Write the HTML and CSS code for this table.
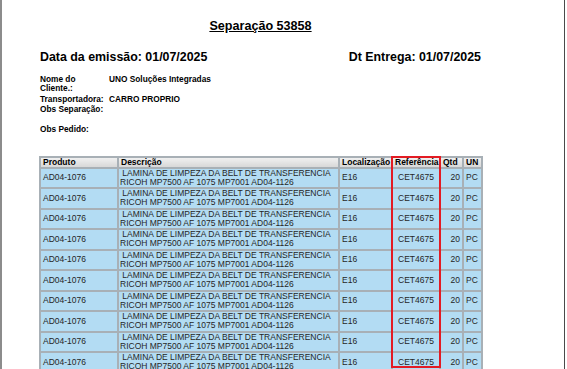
FILE: index.html
```html
<!DOCTYPE html>
<html lang="pt-BR">
<head>
<meta charset="utf-8">
<title>Separação 53858</title>
<link rel="stylesheet" href="styles.css">
</head>
<body>
<div class="page">
  <div class="content">
    <h1 class="title">Separação 53858</h1>
    <div class="dates">
      <span>Data da emissão: 01/07/2025</span>
      <span>Dt Entrega: 01/07/2025</span>
    </div>
    <div class="info">
      <div class="lbl">Nome do<br>Cliente.:</div><div class="val">UNO Soluções Integradas</div>
      <div class="lbl">Transportadora:</div><div class="val">CARRO PROPRIO</div>
      <div class="lbl">Obs Separação:</div><div class="val"></div>
      <div class="lbl gap">Obs Pedido:</div><div class="val gap"></div>
    </div>
    <div class="table-wrap">
      <table class="items">
        <colgroup>
          <col class="c-prod"><col class="c-desc"><col class="c-loc"><col class="c-ref"><col class="c-qtd"><col class="c-un">
        </colgroup>
        <thead>
          <tr><th>Produto</th><th>Descrição</th><th>Localização</th><th>Referência</th><th>Qtd</th><th>UN</th></tr>
        </thead>
        <tbody>
          <tr><td>AD04-1076</td><td class="desc">&nbsp;LAMINA DE LIMPEZA DA BELT DE TRANSFERENCIA<br>RICOH MP7500 AF 1075 MP7001 AD04-1126</td><td>E16</td><td class="ref">CET4675</td><td class="qtd">20</td><td>PC</td></tr>
          <tr><td>AD04-1076</td><td class="desc">&nbsp;LAMINA DE LIMPEZA DA BELT DE TRANSFERENCIA<br>RICOH MP7500 AF 1075 MP7001 AD04-1126</td><td>E16</td><td class="ref">CET4675</td><td class="qtd">20</td><td>PC</td></tr>
          <tr><td>AD04-1076</td><td class="desc">&nbsp;LAMINA DE LIMPEZA DA BELT DE TRANSFERENCIA<br>RICOH MP7500 AF 1075 MP7001 AD04-1126</td><td>E16</td><td class="ref">CET4675</td><td class="qtd">20</td><td>PC</td></tr>
          <tr><td>AD04-1076</td><td class="desc">&nbsp;LAMINA DE LIMPEZA DA BELT DE TRANSFERENCIA<br>RICOH MP7500 AF 1075 MP7001 AD04-1126</td><td>E16</td><td class="ref">CET4675</td><td class="qtd">20</td><td>PC</td></tr>
          <tr><td>AD04-1076</td><td class="desc">&nbsp;LAMINA DE LIMPEZA DA BELT DE TRANSFERENCIA<br>RICOH MP7500 AF 1075 MP7001 AD04-1126</td><td>E16</td><td class="ref">CET4675</td><td class="qtd">20</td><td>PC</td></tr>
          <tr><td>AD04-1076</td><td class="desc">&nbsp;LAMINA DE LIMPEZA DA BELT DE TRANSFERENCIA<br>RICOH MP7500 AF 1075 MP7001 AD04-1126</td><td>E16</td><td class="ref">CET4675</td><td class="qtd">20</td><td>PC</td></tr>
          <tr><td>AD04-1076</td><td class="desc">&nbsp;LAMINA DE LIMPEZA DA BELT DE TRANSFERENCIA<br>RICOH MP7500 AF 1075 MP7001 AD04-1126</td><td>E16</td><td class="ref">CET4675</td><td class="qtd">20</td><td>PC</td></tr>
          <tr><td>AD04-1076</td><td class="desc">&nbsp;LAMINA DE LIMPEZA DA BELT DE TRANSFERENCIA<br>RICOH MP7500 AF 1075 MP7001 AD04-1126</td><td>E16</td><td class="ref">CET4675</td><td class="qtd">20</td><td>PC</td></tr>
          <tr><td>AD04-1076</td><td class="desc">&nbsp;LAMINA DE LIMPEZA DA BELT DE TRANSFERENCIA<br>RICOH MP7500 AF 1075 MP7001 AD04-1126</td><td>E16</td><td class="ref">CET4675</td><td class="qtd">20</td><td>PC</td></tr>
          <tr><td>AD04-1076</td><td class="desc">&nbsp;LAMINA DE LIMPEZA DA BELT DE TRANSFERENCIA<br>RICOH MP7500 AF 1075 MP7001 AD04-1126</td><td>E16</td><td class="ref">CET4675</td><td class="qtd">20</td><td>PC</td></tr>
        </tbody>
      </table>
      <div class="ref-mark"></div>
    </div>
  </div>
</div>
</body>
</html>
```
FILE: styles.css
```css
html, body {
  margin: 0;
  padding: 0;
  background: #ffffff;
  overflow: hidden;
}
body {
  font-family: "Liberation Sans", Arial, sans-serif;
  color: #000;
  width: 567px;
  height: 369px;
}
.page {
  box-sizing: border-box;
  width: 565px;
  height: 369px;
  border-left: 2px solid #8c8c8c;
  border-right: 1px solid #4a4a4a;
  overflow: hidden;
}
.content {
  width: 441px;
  padding-left: 38px;
}
.title {
  margin: 0;
  padding-top: 19px;
  text-align: center;
  font-size: 12.6px;
  font-weight: bold;
  line-height: 15px;
  text-decoration: underline;
}
.dates {
  display: flex;
  justify-content: space-between;
  margin-top: 16px;
  font-size: 12.4px;
  font-weight: bold;
  line-height: 15px;
}
.info {
  display: grid;
  grid-template-columns: 69px auto;
  row-gap: 1px;
  margin-top: 9.5px;
  font-size: 8.3px;
  font-weight: bold;
  line-height: 9.5px;
}
.info .gap {
  margin-top: 9.5px;
}
.table-wrap {
  position: relative;
  margin-top: 21px;
  margin-left: -1px;
  width: 442px;
}
.items {
  width: 442px;
  border-collapse: collapse;
  table-layout: fixed;
  font-size: 8.5px;
}
.c-prod { width: 78px; }
.c-desc { width: 221px; }
.c-loc { width: 53px; }
.c-ref { width: 48px; }
.c-qtd { width: 23px; }
.c-un { width: 19px; }
.items th,
.items td {
  border: 2px solid #a8b0b6;
  padding: 0 2px;
  overflow: hidden;
  white-space: nowrap;
}
.items th {
  height: 9px;
  line-height: 9px;
  text-align: left;
  font-weight: bold;
  color: #000;
  background: linear-gradient(#f0f0f0, #d8d8d8);
}
.items td {
  height: 18.5px;
  line-height: 9.2px;
  background: #b3dcf3;
  color: #262626;
}
.items td.desc {
  padding-left: 1px;
}
.items td.ref {
  text-align: center;
}
.items td.qtd {
  text-align: right;
}
.ref-mark {
  position: absolute;
  left: 352px;
  top: 0;
  width: 46px;
  height: 208px;
  border: 2px solid #e31b23;
  pointer-events: none;
}
```
